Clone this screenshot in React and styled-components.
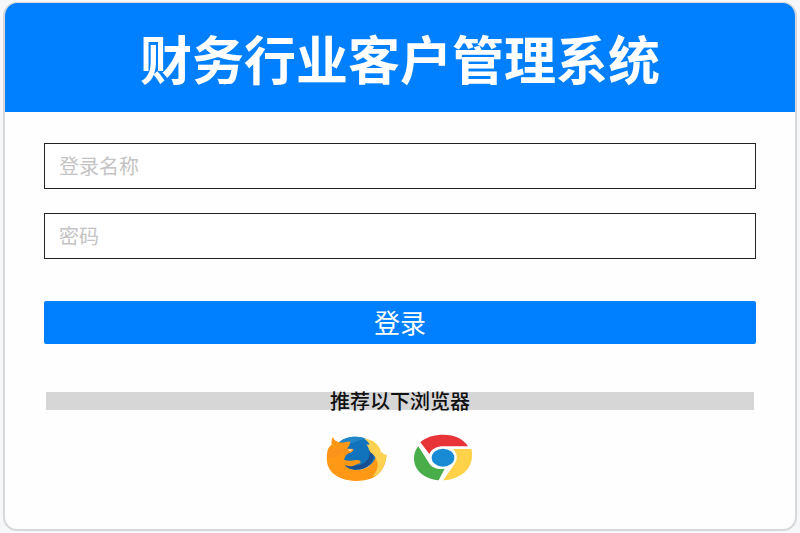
import React from "react";
import styled, { createGlobalStyle } from "styled-components";

const GlobalStyle = createGlobalStyle`
  *, *::before, *::after { box-sizing: border-box; }
  body {
    margin: 0;
    background: #f5f7f9;
    font-family: "Noto Sans CJK SC", sans-serif;
  }
`;

const Page = styled.main`
  min-height: 100vh;
  padding: 2px 3px;
  display: flex;
`;

const Card = styled.section`
  flex: 1;
  min-width: 0;
  border: 2px solid #d5d7d9;
  border-top-width: 1px;
  border-radius: 14px;
  background: #fefefe;
  overflow: hidden;
`;

const Header = styled.header`
  display: flex;
  align-items: center;
  justify-content: center;
  height: 109px;
  background: #0080ff;
`;

const Title = styled.h1`
  margin: 0;
  color: #fff;
  font-size: 52px;
  line-height: 60px;
  font-weight: 700;
  white-space: nowrap;
`;

const LoginForm = styled.form`
  display: flex;
  flex-direction: column;
  gap: 24px;
  padding: 31px 39px 0;
`;

const TextField = styled.input`
  width: 100%;
  height: 46px;
  padding: 0 14px 2px;
  border: 1px solid #222;
  border-radius: 0;
  background: #fff;
  color: #222;
  font-family: inherit;
  font-size: 20px;
  outline: none;

  &::placeholder {
    color: #c4c4c4;
    opacity: 1;
  }
`;

const SubmitButton = styled.button`
  width: 100%;
  height: 43px;
  margin-top: 18px;
  padding: 0 0 2px;
  border: 0;
  border-radius: 2px;
  background: #0080ff;
  color: #fff;
  font-family: inherit;
  font-size: 26px;
  line-height: 41px;
  cursor: pointer;
`;

const Browsers = styled.section`
  padding: 48px 41px 0;
`;

const BrowsersHeading = styled.h2`
  margin: 0;
  background: #d6d6d6;
  color: #111;
  font-size: 20px;
  line-height: 18px;
  font-weight: 500;
  text-align: center;
`;

const BrowserList = styled.div`
  display: flex;
  justify-content: center;
  gap: 26px;
  margin-top: 24px;
  padding-right: 2px;
`;

const BrowserLink = styled.a`
  display: block;
  line-height: 0;
`;

function FirefoxIcon() {
  return (
    <svg width="61" height="48" viewBox="48 26 184 144" aria-hidden="true">
      <ellipse cx="136" cy="84" rx="65" ry="50" fill="#1273bd" />
      <path d="M88 50C108 32 148 29 169 41C152 40 139 53 119 54Z" fill="#2086c8" />
      <path d="M172 60C190 68 196 86 190 101C182 122 163 134 141 133C122 132 110 126 103 116C137 128 166 119 176 99C182 86 180 72 172 60Z" fill="#174f91" />
      <path d="M69 35C72 45 80 49 91 51C103 52 109 48 121 48C122 56 117 63 111 69L130 71C131 79 124 82 113 85C107 90 105 97 102 103C117 109 134 104 145 104C152 105 154 110 151 114C142 115 137 120 129 122C120 125 111 121 104 119C111 129 125 134 141 134C163 134 183 124 194 103L205 90L230 88C230 111 221 132 205 147C189 162 162 168 135 167C97 166 67 151 56 127C48 109 50 90 53 74C55 67 60 62 65 58C64 49 65 41 69 35Z" fill="#ff9814" />
      <path d="M162 40C184 42 197 50 205 61C211 68 213 74 214 82C220 80 222 85 223 90L230 86C230 107 223 128 207 145C201 150 194 153 187 154C204 138 206 121 202 108C199 98 194 91 186 84C176 76 178 66 170 57L180 58C176 50 169 44 162 40Z" fill="#ffd153" />
      <path d="M56 70C78 63 102 71 125 72C128 79 122 82 112 85C96 79 83 88 80 99C72 91 64 95 54 99C51 89 53 77 56 70Z" fill="#f58924" opacity=".4" />
      <path d="M113 72H128L121 78Z" fill="#fff2d9" />
    </svg>
  );
}

function ChromeIcon() {
  return (
    <svg width="60" height="47" viewBox="38 28 180 141" aria-hidden="true">
      <path d="M60 53C76 37 103 30 129 30C163 30 190 43 203 65H129C110 65 94 73 87 88Z" fill="#e83439" />
      <path d="M54 65L86 115C95 130 114 136 133 132L115 167C72 163 41 138 41 101C41 87 46 75 54 65Z" fill="#49ae49" />
      <path d="M158 73H213C221 106 208 139 175 155C160 163 145 167 129 167L163 117C173 102 171 85 158 73Z" fill="#ffd24a" />
      <ellipse cx="128" cy="99" rx="34" ry="27" fill="#188bd4" />
    </svg>
  );
}

export default function App() {
  return (
    <>
      <GlobalStyle />
      <Page>
        <Card>
          <Header>
            <Title>财务行业客户管理系统</Title>
          </Header>
          <LoginForm onSubmit={(event) => event.preventDefault()}>
            <TextField type="text" name="username" autoComplete="username" placeholder="登录名称" aria-label="登录名称" />
            <TextField type="password" name="password" autoComplete="current-password" placeholder="密码" aria-label="密码" />
            <SubmitButton type="submit">登录</SubmitButton>
          </LoginForm>
          <Browsers>
            <BrowsersHeading>推荐以下浏览器</BrowsersHeading>
            <BrowserList>
              <BrowserLink href="#firefox" aria-label="Firefox">
                <FirefoxIcon />
              </BrowserLink>
              <BrowserLink href="#chrome" aria-label="Chrome">
                <ChromeIcon />
              </BrowserLink>
            </BrowserList>
          </Browsers>
        </Card>
      </Page>
    </>
  );
}
